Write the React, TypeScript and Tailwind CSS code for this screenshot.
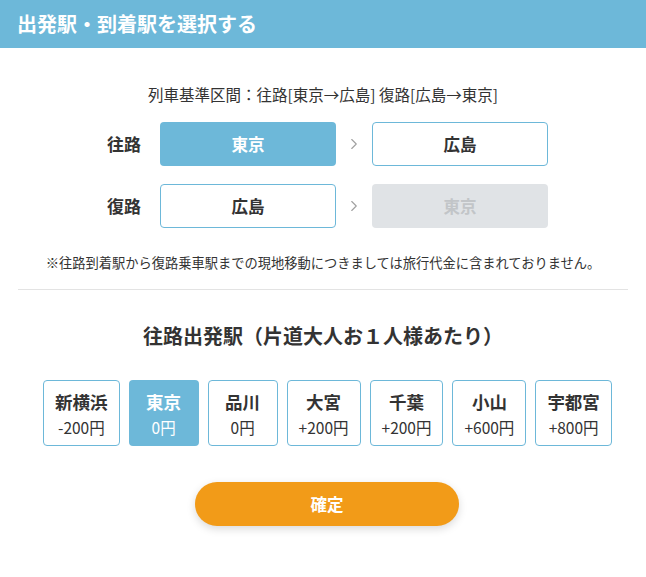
import { ChevronRight } from 'lucide-react';

const stations = [
  { name: '新横浜', price: '-200円' },
  { name: '東京', price: '0円', active: true },
  { name: '品川', price: '0円' },
  { name: '大宮', price: '+200円' },
  { name: '千葉', price: '+200円' },
  { name: '小山', price: '+600円' },
  { name: '宇都宮', price: '+800円' },
];

function RouteRow({ label, from, to }: { label: string; from: { text: string; active?: boolean }; to: { text: string; disabled?: boolean } }) {
  return (
    <div className="flex items-center justify-center pl-[9px]">
      <div className="w-[35px] mr-[18px] text-[17px] font-bold text-[#333]">{label}</div>
      <div
        className={
          from.active
            ? 'w-[176px] h-[44px] rounded flex items-center justify-center text-[16.5px] font-bold bg-[#6db8d9] text-white'
            : 'w-[176px] h-[44px] rounded flex items-center justify-center text-[16.5px] font-bold bg-white text-[#333] border border-[#6db8d9]'
        }
      >
        {from.text}
      </div>
      <div className="w-[36px] flex items-center justify-center text-[#a0a0a0]">
        <ChevronRight size={18} strokeWidth={1.5} />
      </div>
      <div
        className={
          to.disabled
            ? 'w-[176px] h-[44px] rounded flex items-center justify-center text-[16.5px] font-bold bg-[#e0e3e6] text-[#c2c5c8]'
            : 'w-[176px] h-[44px] rounded flex items-center justify-center text-[16.5px] font-bold bg-white text-[#333] border border-[#6db8d9]'
        }
      >
        {to.text}
      </div>
    </div>
  );
}

export default function App() {
  return (
    <div className="w-[646px] min-h-[577px] bg-white" style={{ fontFamily: '"Noto Sans CJK JP", "Noto Sans", sans-serif' }}>
      <div className="h-12 bg-[#6db8d9] flex items-center pl-[17px]">
        <h1 className="text-[20px] font-bold text-white">出発駅・到着駅を選択する</h1>
      </div>

      <p className="mt-[35px] text-center text-[15.5px] leading-[22px] text-[#333]">
        列車基準区間：往路[東京→広島] 復路[広島→東京]
      </p>

      <div className="mt-[17px] flex flex-col gap-[18px]">
        <RouteRow label="往路" from={{ text: '東京', active: true }} to={{ text: '広島' }} />
        <RouteRow label="復路" from={{ text: '広島' }} to={{ text: '東京', disabled: true }} />
      </div>

      <p className="mt-[26px] text-center text-[13.25px] leading-[18px] text-[#333]">
        ※往路到着駅から復路乗車駅までの現地移動につきましては旅行代金に含まれておりません。
      </p>

      <hr className="mt-[17px] mx-[18px] border-t border-[#e3e3e3]" />

      <h2 className="mt-[33px] text-center text-[20px] leading-[26px] font-bold text-[#333]">
        往路出発駅（片道大人お１人様あたり）
      </h2>

      <div className="mt-[31px] flex justify-center gap-[9px] pl-[9px]">
        {stations.map((s) => (
          <div
            key={s.name}
            className={
              s.active
                ? 'min-w-[70px] h-[66px] px-[11px] pt-[2px] rounded flex flex-col items-center justify-center bg-[#6db8d9] text-white'
                : 'min-w-[70px] h-[66px] px-[11px] pt-[2px] rounded flex flex-col items-center justify-center bg-white text-[#333] border border-[#6db8d9]'
            }
          >
            <span className="text-[17.5px] leading-[22px] font-bold">{s.name}</span>
            <span className="text-[15.5px] leading-[20px] mt-[4px]">{s.price}</span>
          </div>
        ))}
      </div>

      <div className="mt-[36px] flex justify-center pl-[8px]">
        <button className="w-[264px] h-[44px] rounded-full bg-[#f29b18] text-white text-[16.5px] font-bold shadow-[0_3px_8px_rgba(0,0,0,0.15)]">
          確定
        </button>
      </div>
    </div>
  );
}
